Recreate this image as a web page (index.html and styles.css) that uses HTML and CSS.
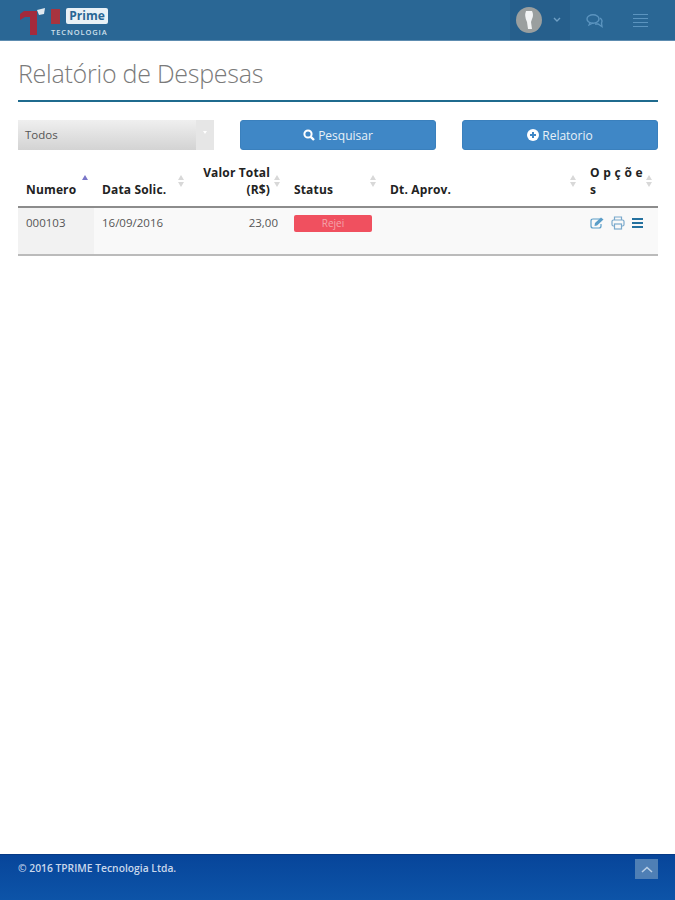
FILE: index.html
```html
<!DOCTYPE html>
<html lang="pt">
<head>
	<meta charset="UTF-8">
	<meta name="viewport" content="width=device-width, initial-scale=1.0">
	<title>Relatório de Despesas</title>
	<link rel="stylesheet" href="styles.css">
</head>
<body>
	<header class="topbar">
		<div class="logo">
			<svg class="logo-mark" width="25" height="28" viewBox="0 0 25 28">
				<path d="M0 6 L4 3 H17 V27 H10 V9 H5 L0 12 Z" fill="#a32a3c"/>
				<path d="M17 2 L25 0 L24 6 L19 7 Z" fill="#dfe8ef"/>
			</svg>
			<div class="logo-text">
				<div class="logo-top">
					<span class="logo-t"></span>
					<span class="logo-prime">Prime</span>
				</div>
				<div class="logo-sub">TECNOLOGIA</div>
			</div>
		</div>
		<div class="topbar-right">
			<div class="user-box">
				<span class="avatar">
					<svg width="14" height="20" viewBox="0 0 14 20">
						<path d="M4 1 H10 Q12 5 10 9 L9 12 L10 19 H6 L5 12 Q2 6 4 1 Z" fill="#f2f4f5"/>
					</svg>
				</span>
				<svg class="chevron" width="8" height="6" viewBox="0 0 8 6">
					<path d="M1 1 L4 4 L7 1" fill="none" stroke="#6f9fc4" stroke-width="1.4"/>
				</svg>
			</div>
			<div class="top-icon chat">
				<svg width="18" height="15" viewBox="0 0 18 15">
					<ellipse cx="7" cy="6" rx="6" ry="4.2" fill="none" stroke="#5b94bf" stroke-width="1.4"/>
					<path d="M4 9.5 L3 12 L7 10" fill="none" stroke="#5b94bf" stroke-width="1.2"/>
					<path d="M14 5 Q17 7 15.500 10 L16 13.500 L12 11 H9" fill="none" stroke="#5b94bf" stroke-width="1.4"/>
				</svg>
			</div>
			<div class="top-icon menu">
				<span></span><span></span><span></span><span></span>
			</div>
		</div>
	</header>

	<main class="content">
		<h1 class="page-title">Relatório de Despesas</h1>

		<div class="filters">
			<div class="select-box">
				<span class="select-value">Todos</span>
				<span class="select-arrow"></span>
			</div>
			<button class="btn">
				<svg width="12" height="12" viewBox="0 0 12 12">
					<circle cx="5" cy="5" r="3.6" fill="none" stroke="#fff" stroke-width="2"/>
					<path d="M7.800 7.800 L11 11" stroke="#fff" stroke-width="2.400"/>
				</svg>
				Pesquisar
			</button>
			<button class="btn">
				<svg width="12" height="12" viewBox="0 0 12 12">
					<circle cx="6" cy="6" r="6" fill="#fff"/>
					<path d="M6 3 V9 M3 6 H9" stroke="#3f87c6" stroke-width="2"/>
				</svg>
				Relatorio
			</button>
		</div>

		<table class="grid">
			<thead>
				<tr>
					<th class="col-num sorted">Numero</th>
					<th class="col-date sort">Data Solic.</th>
					<th class="col-total sort">Valor Total (R$)</th>
					<th class="col-status sort">Status</th>
					<th class="col-aprov sort">Dt. Aprov.</th>
					<th class="col-opt sort"><span class="opt-label">Opçõe s</span></th>
				</tr>
			</thead>
			<tbody>
				<tr>
					<td class="col-num">000103</td>
					<td>16/09/2016</td>
					<td class="col-total">23,00</td>
					<td><span class="badge">Rejei</span></td>
					<td></td>
					<td>
						<div class="row-icons">
							<svg width="14" height="12" viewBox="0 0 14 12">
								<path d="M10 2 H3 Q1 2 1 4 V9 Q1 11 3 11 H9 Q11 11 11 9 V7" fill="none" stroke="#5a9dc8" stroke-width="1.200"/>
								<path d="M5 6 L11 0.500 L13.500 2.500 L7 8.500 L4.500 9 Z" fill="#5a9dc8"/>
							</svg>
							<svg width="14" height="14" viewBox="0 0 14 14">
								<path d="M3.500 4 V1 H10.500 V4" fill="none" stroke="#7aa9cc" stroke-width="1.200"/>
								<rect x="1" y="4" width="12" height="6" rx="1.500" fill="none" stroke="#7aa9cc" stroke-width="1.200"/>
								<rect x="3.500" y="8" width="7" height="5" fill="#f9f9f9" stroke="#7aa9cc" stroke-width="1.200"/>
							</svg>
							<svg width="11" height="10" viewBox="0 0 11 10">
								<path d="M0 1 H11 M0 5 H11 M0 9 H11" stroke="#24719f" stroke-width="1.800"/>
							</svg>
						</div>
					</td>
				</tr>
			</tbody>
		</table>
	</main>

	<footer class="footer">
		<span class="copy">© 2016 TPRIME Tecnologia Ltda.</span>
		<span class="to-top">
			<svg width="12" height="7" viewBox="0 0 12 7">
				<path d="M1 6 L6 1.500 L11 6" fill="none" stroke="#b9cfe6" stroke-width="1.600"/>
			</svg>
		</span>
	</footer>
</body>
</html>
```
FILE: styles.css
```css
* {
	box-sizing: border-box;
}
html, body {
	height: 100%;
}
body {
	display: flex;
	flex-direction: column;
	margin: 0;
	background-color: #fff;
	font-family: "Open Sans", sans-serif;
	color: #333;
}
.topbar {
	display: flex;
	justify-content: space-between;
	height: 41px;
	padding-left: 20px;
	background-color: #2a6795;
	border-bottom: 1px solid #5d8cb0;
}
.logo {
	display: flex;
	align-items: flex-start;
	padding-top: 8px;
}
.logo-text {
	margin-left: 6px;
}
.logo-top {
	display: flex;
	align-items: center;
	gap: 6px;
	height: 16px;
}
.logo-t {
	width: 9px;
	height: 15px;
	background-color: #a8343f;
}
.logo-prime {
	width: 42px;
	height: 16px;
	background-color: #e9f1f6;
	border-radius: 2px;
	color: #2a6795;
	font-size: 12px;
	font-weight: 700;
	line-height: 16px;
	text-align: center;
}
.logo-sub {
	margin-top: 4px;
	color: #cfe0ec;
	font-size: 7.500px;
	font-weight: 600;
	letter-spacing: 0.900px;
	line-height: 9px;
	white-space: nowrap;
}
.topbar-right {
	display: flex;
	padding-right: 15px;
}
.user-box {
	display: flex;
	align-items: center;
	width: 60px;
	height: 40px;
	padding-left: 6px;
	background-color: #265f8c;
}
.avatar {
	display: flex;
	justify-content: center;
	align-items: center;
	width: 26px;
	height: 26px;
	border-radius: 50%;
	background-color: #9a9f9f;
}
.chevron {
	margin-left: 11px;
}
.top-icon {
	display: flex;
	justify-content: center;
	align-items: center;
	height: 40px;
}
.chat {
	width: 50px;
}
.menu {
	flex-direction: column;
	gap: 3px;
	width: 40px;
}
.menu span {
	width: 15px;
	height: 1px;
	background-color: #5b94bf;
}
.content {
	flex: 1;
	padding: 0 17px 0 18px;
}
.page-title {
	height: 61px;
	margin: 0;
	padding-top: 14px;
	border-bottom: 2px solid #1f6b8e;
	color: #7a7a7a;
	font-size: 25px;
	font-weight: 300;
	line-height: 36px;
	letter-spacing: -0.250px;
}
.filters {
	display: flex;
	justify-content: space-between;
	margin-top: 18px;
}
.select-box {
	display: flex;
	width: 196px;
	height: 30px;
	background: linear-gradient(#efefef, #d3d3d3);
}
.select-value {
	flex: 1;
	padding-left: 7px;
	color: #555;
	font-size: 11.500px;
	line-height: 29px;
}
.select-arrow {
	display: flex;
	justify-content: center;
	width: 18px;
	padding-top: 11px;
	background-color: #e6e6e6;
}
.select-arrow::after {
	content: "";
	width: 0;
	height: 0;
	border-left: 2px solid transparent;
	border-right: 2px solid transparent;
	border-top: 3px solid #fff;
}
.btn {
	display: flex;
	justify-content: center;
	align-items: center;
	gap: 3px;
	width: 196px;
	height: 30px;
	padding: 0;
	background-color: #3f87c6;
	border: 1px solid #3a80bd;
	border-radius: 3px;
	color: #e8f1f8;
	font-family: inherit;
	font-size: 12px;
}
.grid {
	width: 640px;
	margin-top: 10px;
	border-collapse: collapse;
	table-layout: fixed;
	font-size: 11.500px;
}
.grid th {
	position: relative;
	height: 47px;
	padding: 0 16px 8px 8px;
	border-bottom: 2px solid #8c8c8c;
	color: #222;
	font-size: 12px;
	font-weight: 700;
	letter-spacing: 0.150px;
	line-height: 17px;
	text-align: left;
	vertical-align: bottom;
}
.grid th::before, .grid th::after {
	content: "";
	position: absolute;
	right: 6px;
	width: 0;
	height: 0;
	border-left: 3px solid transparent;
	border-right: 3px solid transparent;
}
.sort::before {
	top: 15px;
	border-bottom: 5px solid #d8d8d8;
}
.sort::after {
	top: 22px;
	border-top: 5px solid #d8d8d8;
}
.sorted::before {
	top: 15px;
	border-bottom: 5px solid #7a76c8;
}
.grid td {
	height: 48px;
	padding: 6px 8px 0;
	border-bottom: 2px solid #bbb;
	background-color: #f9f9f9;
	color: #555;
	line-height: 17px;
	vertical-align: top;
}
.grid td.col-num {
	background-color: #f2f2f2;
}
.grid .col-num {
	width: 76px;
}
.grid .col-date {
	width: 96px;
}
.grid .col-total {
	width: 96px;
	text-align: right;
}
.grid .col-status {
	width: 96px;
}
.grid .col-aprov {
	width: 200px;
}
.opt-label {
	display: block;
	width: 60px;
	letter-spacing: 3.700px;
}
.badge {
	display: block;
	width: 78px;
	height: 17px;
	margin-top: 1px;
	background-color: #f0505f;
	border-radius: 2px;
	color: #f4a5ac;
	font-size: 10px;
	line-height: 17px;
	text-align: center;
}
.row-icons {
	display: flex;
	align-items: center;
	gap: 7px;
	margin-top: 2px;
}
.footer {
	display: flex;
	justify-content: space-between;
	align-items: flex-start;
	height: 46px;
	padding: 4px 17px 0 18px;
	background: linear-gradient(#07459a, #0d54a8);
	border-top: 1px solid #063a86;
}
.copy {
	color: #c9d8ec;
	font-size: 10.300px;
	font-weight: 600;
	line-height: 18px;
}
.to-top {
	display: flex;
	justify-content: center;
	align-items: center;
	width: 23px;
	height: 20px;
	background-color: #4f7fb5;
}
```
